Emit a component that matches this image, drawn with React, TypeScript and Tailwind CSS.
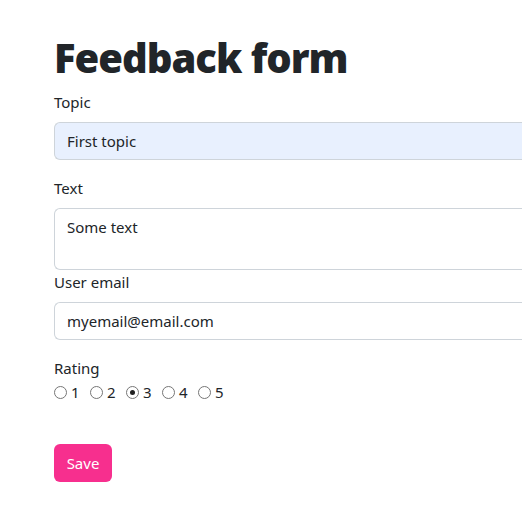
import React from "react";

function Radio({ n, checked }: { n: number; checked?: boolean }) {
  return (
    <label className="flex items-center w-[36px] shrink-0">
      <span className="w-[13px] h-[13px] rounded-full border border-[#767676] bg-white flex items-center justify-center">
        {checked && <span className="w-[5px] h-[5px] rounded-full bg-[#212121]" />}
      </span>
      <span className="ml-[4px] leading-6">{n}</span>
    </label>
  );
}

export default function App() {
  return (
    <div
      className="bg-white min-h-[508px] text-[#212529] text-[15px] leading-6 pl-[54px] pt-[34px]"
      style={{ fontFamily: '"Noto Sans", "Open Sans", sans-serif' }}
    >
      <h1 className="text-[40px] leading-[48px] font-black mb-2 tracking-[-1px]">Feedback form</h1>
      <div className="mb-4">
        <div className="mb-2">Topic</div>
        <div className="h-[38px] border border-[#ced4da] bg-[#e8f0fe] rounded-l-[6px] border-r-0 px-3 py-[6px] flex items-center">
          First topic
        </div>
      </div>
      <div>
        <div className="mb-2">Text</div>
        <div className="h-[62px] border border-[#ced4da] bg-white rounded-l-[6px] border-r-0 px-3 py-[6px]">
          Some text
        </div>
      </div>
      <div className="mb-4">
        <div className="mb-2">User email</div>
        <div className="h-[38px] border border-[#ced4da] bg-white rounded-l-[6px] border-r-0 px-3 py-[6px] flex items-center">
          myemail@email.com
        </div>
      </div>
      <div>
        <div>Rating</div>
        <div className="flex items-center">
          <Radio n={1} />
          <Radio n={2} />
          <Radio n={3} checked />
          <Radio n={4} />
          <Radio n={5} />
        </div>
      </div>
      <div className="mt-10">
        <button className="h-[38px] w-[58px] rounded-[6px] bg-[#f72f8e] text-white">Save</button>
      </div>
    </div>
  );
}
